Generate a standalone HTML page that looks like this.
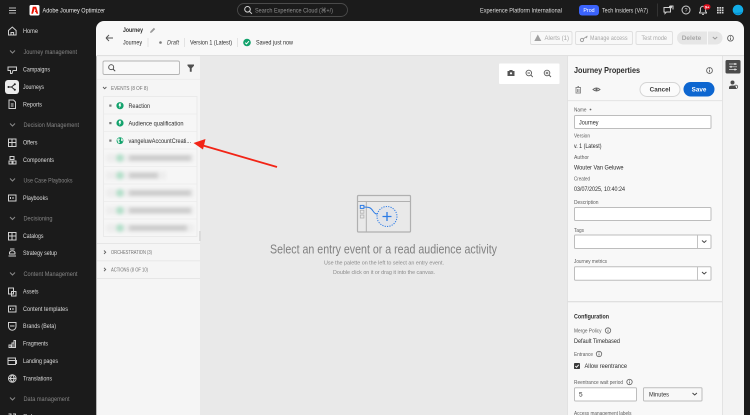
<!DOCTYPE html>
<html lang="en">
<head>
<meta charset="utf-8">
<title>Adobe Journey Optimizer</title>
<style>
html,body{margin:0;padding:0;background:#1b1b1b;width:750px;height:415px;overflow:hidden}
svg{display:block;font-family:"Liberation Sans",sans-serif;filter:blur(.28px)}
.n{font-size:6.500px;fill:#dcdcdc}
.g{font-size:6.500px;fill:#858585}
.ic{fill:none;stroke:#d0d0d0;stroke-width:1}
.t{font-size:6.500px;fill:#2c2c2c}
.l{font-size:5.500px;fill:#5c5c5c}
.d{fill:none;stroke:#5e5e5e;stroke-width:.9}
.dis{font-size:6.500px;fill:#a8a8a8}
.s{font-size:5.500px;fill:#707070}
.inp{fill:#fff;stroke:#bdbdbd;stroke-width:1}
</style>
</head>
<body>
<svg width="750" height="415" viewBox="0 0 750 415" xmlns="http://www.w3.org/2000/svg">
<defs>
<filter id="bl" x="-20%" y="-80%" width="140%" height="260%"><feGaussianBlur stdDeviation="1.900"/></filter>
</defs>
<rect width="750" height="415" fill="#1b1b1b"/>

<!-- top bar -->
<path d="M9 8h7M9 10.500h7M9 13h7" stroke="#bdbdbd" stroke-width="1"/>
<rect x="29.500" y="5" width="10" height="10.500" rx="1.500" fill="#fff"/>
<path d="M32.800 6.800h3.400l2 7h-1.700l-.6-1.700h-1.100l.6-1.500.3 0-.9-2.300-1.800 5.500h-1.700z" fill="#eb1000"/>
<text x="42.500" y="12.300" font-size="6.700" fill="#e8e8e8" textLength="62.500" lengthAdjust="spacingAndGlyphs">Adobe Journey Optimizer</text>
<rect x="237.500" y="3.500" width="110" height="13" rx="6.500" fill="#1b1b1b" stroke="#4a4a4a" stroke-width=".9"/>
<circle cx="247.500" cy="9.300" r="2.800" fill="none" stroke="#d5d5d5" stroke-width="1"/><path d="M249.500 11.400l2.400 2.400" stroke="#d5d5d5"/>
<text x="255" y="12.500" font-size="6.500" fill="#8f8f8f" textLength="78" lengthAdjust="spacingAndGlyphs">Search Experience Cloud (⌘+/)</text>
<text x="480" y="12.300" class="n" textLength="82" lengthAdjust="spacingAndGlyphs">Experience Platform International</text>
<rect x="579" y="5" width="20" height="10.500" rx="3" fill="#3b63fb"/>
<text x="589" y="12.200" font-size="5.300" fill="#fff" text-anchor="middle">Prod</text>
<text x="602" y="12.300" class="n" textLength="46" lengthAdjust="spacingAndGlyphs">Tech Insiders (VA7)</text>
<path d="M657.500 3.500v13" stroke="#3a3a3a" stroke-width=".8"/>
<path class="ic" d="M664 7.500h6.500v4.500h-4l-1.500 1.500v-1.500h-1zM670.500 6l2.500 0v3.500"/>
<circle cx="670.500" cy="7" r="1.500" fill="#d5d5d5"/>
<circle class="ic" cx="686" cy="10" r="4"/><text x="686" y="12" font-size="5.500" fill="#d5d5d5" text-anchor="middle">?</text>
<path class="ic" d="M699.500 13v-.6l.9-1v-2.500a2.600 2.600 0 0 1 5.200 0v2.500l.9 1v.6zM702 14.400h2"/>
<rect x="703.500" y="4.300" width="7" height="5.200" rx="2.600" fill="#e0101e"/>
<text x="707" y="8.300" font-size="4" font-weight="bold" fill="#fff" text-anchor="middle">9+</text>
<g fill="#d5d5d5"><rect x="717" y="7" width="1.700" height="1.700"/><rect x="719.400" y="7" width="1.700" height="1.700"/><rect x="721.800" y="7" width="1.700" height="1.700"/><rect x="717" y="9.400" width="1.700" height="1.700"/><rect x="719.400" y="9.400" width="1.700" height="1.700"/><rect x="721.800" y="9.400" width="1.700" height="1.700"/><rect x="717" y="11.800" width="1.700" height="1.700"/><rect x="719.400" y="11.800" width="1.700" height="1.700"/><rect x="721.800" y="11.800" width="1.700" height="1.700"/></g>
<circle cx="738" cy="10" r="5.300" fill="#12aee8"/><path d="M733.500 12.500q4.500 1 9 -1a5.300 5.300 0 0 1-9 1z" fill="#0a8fd0"/>

<!-- sidebar -->
<g>
<path class="ic" d="M8.500 30.500l3.800-3.500 3.800 3.500v4.500h-7.600zM11 35v-2.500h2.600V35"/>
<text x="23" y="33.200" class="n" textLength="15" lengthAdjust="spacingAndGlyphs">Home</text>
<path class="ic" d="M10 50.500l2.500 2.500 2.500-2.500" style="stroke:#8a8a8a"/>
<text x="23.500" y="54.200" class="g" textLength="53.500" lengthAdjust="spacingAndGlyphs">Journey management</text>
<path class="ic" d="M8 67h8.500v3.500H13l-1 3h-1.500v-3H8zM16.500 66.500v1"/>
<text x="23" y="71.700" class="n" textLength="27" lengthAdjust="spacingAndGlyphs">Campaigns</text>
<rect x="5" y="80" width="14" height="14" rx="3" fill="#ececec"/>
<path d="M8.500 87h3M11.500 87l3-2.500M11.500 87l3 2.500" stroke="#222" stroke-width=".9" fill="none"/><circle cx="8.500" cy="87" r="1" fill="#222"/><circle cx="14.800" cy="84.300" r="1" fill="#222"/><circle cx="14.800" cy="89.700" r="1" fill="#222"/>
<text x="23" y="89" class="n" textLength="21" lengthAdjust="spacingAndGlyphs">Journeys</text>
<path class="ic" d="M9 100h4.500l2 2v6.500H9zM10.800 104h2.800M10.800 106h2.800"/>
<text x="23" y="106.500" class="n" textLength="19" lengthAdjust="spacingAndGlyphs">Reports</text>
<path class="ic" d="M10 123.500l2.500 2.500 2.500-2.500" style="stroke:#8a8a8a"/>
<text x="23.500" y="127.200" class="g" textLength="55.500" lengthAdjust="spacingAndGlyphs">Decision Management</text>
<path class="ic" d="M8.500 139h7.500v7.500H8.500zM12 139v7.500M8.500 142.500H16"/>
<text x="23" y="144.700" class="n" textLength="14.500" lengthAdjust="spacingAndGlyphs">Offers</text>
<path class="ic" d="M10 156.500h4v3h-4zM9 161h3v3H9zM13 161h3v3h-3z"/>
<text x="23" y="162" class="n" textLength="31" lengthAdjust="spacingAndGlyphs">Components</text>
<path class="ic" d="M10 178.500l2.500 2.500 2.500-2.500" style="stroke:#8a8a8a"/>
<text x="23.500" y="182.700" class="g" textLength="49" lengthAdjust="spacingAndGlyphs">Use Case Playbooks</text>
<path class="ic" d="M8.500 195h7.500v6H8.500zM10.500 197v2M13 197v2"/>
<text x="23" y="200" class="n" textLength="25" lengthAdjust="spacingAndGlyphs">Playbooks</text>
<path class="ic" d="M10 217l2.500 2.500 2.500-2.500" style="stroke:#8a8a8a"/>
<text x="23.500" y="220.700" class="g" textLength="29" lengthAdjust="spacingAndGlyphs">Decisioning</text>
<path class="ic" d="M8.500 232.500h7.500v7.500H8.500zM12 232.500v7.500M8.500 236H16"/>
<text x="23" y="238" class="n" textLength="20.500" lengthAdjust="spacingAndGlyphs">Catalogs</text>
<path class="ic" d="M9.500 252.500a3 3 0 0 1 5.500 0v1.500h-5.500zM8.500 256h7.500M10 249h4.500"/>
<text x="23" y="255" class="n" textLength="34" lengthAdjust="spacingAndGlyphs">Strategy setup</text>
<path class="ic" d="M10 272.500l2.500 2.500 2.500-2.500" style="stroke:#8a8a8a"/>
<text x="23.500" y="276.200" class="g" textLength="54" lengthAdjust="spacingAndGlyphs">Content Management</text>
<path class="ic" d="M8.500 288h5v6h-5zM11.500 291.500h4.500v4.500h-4.500z"/>
<text x="23" y="293.500" class="n" textLength="15.500" lengthAdjust="spacingAndGlyphs">Assets</text>
<path class="ic" d="M8.500 306h7.500v6H8.500zM10.500 308v2M13 308v2"/>
<text x="23" y="311" class="n" textLength="45" lengthAdjust="spacingAndGlyphs">Content templates</text>
<path class="ic" d="M8.500 322.500h7.500v4a3.750 3.750 0 0 1-7.500 0zM10 326h4.500"/>
<text x="23" y="328.200" class="n" textLength="33" lengthAdjust="spacingAndGlyphs">Brands (Beta)</text>
<path class="ic" d="M8.500 347.500h7.500M9 347v-2h2v2M12 347v-4h2v4M14 347v-6.500h1.500v6.500"/>
<text x="23" y="345.500" class="n" textLength="25" lengthAdjust="spacingAndGlyphs">Fragments</text>
<path class="ic" d="M8 358h7.500v6.500H8zM8 360.500h7.500M16.500 360v4"/>
<text x="23" y="363" class="n" textLength="35" lengthAdjust="spacingAndGlyphs">Landing pages</text>
<circle class="ic" cx="12.300" cy="378.500" r="3.800"/><path class="ic" d="M8.500 378.500h7.600M12.300 374.700c-2.400 2.500-2.400 5 0 7.600M12.300 374.700c2.400 2.500 2.400 5 0 7.600"/>
<text x="23" y="380.500" class="n" textLength="29" lengthAdjust="spacingAndGlyphs">Translations</text>
<path class="ic" d="M10 397.500l2.500 2.500 2.500-2.500" style="stroke:#8a8a8a"/>
<text x="23.500" y="401.200" class="g" textLength="46" lengthAdjust="spacingAndGlyphs">Data management</text>
<path class="ic" d="M8.500 414h2.500v3M13 414h2.500v3"/>
<text x="23" y="418.500" class="n">Schemas</text>
</g>

<!-- main panel -->
<path d="M104 21H736a8 8 0 0 1 8 8V415H96V29a8 8 0 0 1 8-8z" fill="#f8f8f8"/>
<rect x="96.500" y="55" width="647.500" height="1.300" fill="#e0e0e0"/>

<!-- header -->
<path d="M106 38h7M106 38l3-3M106 38l3 3" fill="none" stroke="#555" stroke-width=".9"/>
<text x="123" y="32.200" font-size="6.500" font-weight="bold" fill="#2c2c2c" textLength="20" lengthAdjust="spacingAndGlyphs">Journey</text>
<path d="M150 33l.5-1.800 3.400-3.400 1.300 1.300-3.400 3.400z" fill="#9a9a9a"/>
<text x="123" y="44.700" class="t" textLength="19" lengthAdjust="spacingAndGlyphs">Journey</text>
<path d="M148 38v9M184.500 38v9M237.500 38v9" stroke="#dedede" stroke-width=".8"/>
<circle cx="160.500" cy="42.500" r="1.300" fill="#7a7a7a"/>
<text x="167" y="44.700" font-size="6.500" font-style="italic" fill="#444" textLength="12" lengthAdjust="spacingAndGlyphs">Draft</text>
<text x="190" y="44.700" class="t" textLength="42" lengthAdjust="spacingAndGlyphs">Version 1 (Latest)</text>
<circle cx="247" cy="42.500" r="3.800" fill="#12a26c"/><path d="M245.200 42.600l1.300 1.300 2.400-2.700" fill="none" stroke="#fff" stroke-width="1"/>
<text x="256" y="44.700" class="t" textLength="37" lengthAdjust="spacingAndGlyphs">Saved just now</text>

<g fill="#f8f8f8" stroke="#dedede" stroke-width=".9">
<rect x="530.500" y="31.500" width="41.500" height="13" rx="1.500"/>
<rect x="575.500" y="31.500" width="57" height="13" rx="1.500"/>
<rect x="636" y="31.500" width="36.500" height="13" rx="1.500"/>
</g>
<path d="M537.800 34.500l3.500 6.500h-7z" fill="#a0a0a0"/>
<text x="544.500" y="40.200" class="dis" textLength="24.500" lengthAdjust="spacingAndGlyphs">Alerts (1)</text>
<circle cx="582" cy="40" r="1.600" fill="none" stroke="#a0a0a0" stroke-width="1"/><path d="M583 39l4.500-3M586 37l1 1" stroke="#a0a0a0" stroke-width="1" fill="none"/>
<text x="590" y="40.200" class="dis" textLength="37.500" lengthAdjust="spacingAndGlyphs">Manage access</text>
<text x="641.500" y="40.200" class="dis" textLength="25.500" lengthAdjust="spacingAndGlyphs">Test mode</text>
<path d="M683.500 31.500H707v13h-23.500a6.500 6.500 0 0 1 0-13z" fill="#e6e6e6"/>
<path d="M708 31.500h8a6.500 6.500 0 0 1 0 13h-8z" fill="#e6e6e6"/>
<text x="691.500" y="40.200" class="dis" font-weight="bold" text-anchor="middle">Delete</text>
<path d="M712.800 37l2.200 2 2.200-2" fill="none" stroke="#9a9a9a" stroke-width="1"/>
<circle cx="730.500" cy="38.200" r="2.900" fill="none" stroke="#666" stroke-width=".9"/><path d="M730.500 37.500v2.500M730.500 36v.8" stroke="#666" stroke-width=".9"/>

<!-- canvas -->
<rect x="200" y="56.200" width="367.500" height="358.800" fill="#e9e9e9"/>
<rect x="499" y="63.500" width="60.500" height="20.500" fill="#fff" rx="1"/>
<path d="M507.500 71h1.500l.8-1h2.400l.8 1h1.500v5h-7z" fill="#555"/><circle cx="511" cy="73.300" r="1.100" fill="#fff"/>
<circle cx="528.800" cy="73" r="2.800" class="d"/><path d="M530.800 75l2 2M527.500 73h2.600" class="d"/>
<circle cx="547" cy="73" r="2.800" class="d"/><path d="M549 75l2 2M545.700 73h2.600M547 71.700v2.600" class="d"/>

<!-- illustration -->
<g fill="none">
<rect x="357.500" y="195.500" width="53" height="36.500" rx="1" stroke="#b0b0b0" stroke-width="1.200"/>
<path d="M357.500 201.500h53M366.300 201.500V232" stroke="#b0b0b0" stroke-width="1"/>
<rect x="360.300" y="205.400" width="3.600" height="3" stroke="#2c7be5" stroke-width="1"/>
<rect x="360.300" y="210.200" width="3.600" height="3" stroke="#b0b0b0" stroke-width=".8"/>
<rect x="360.300" y="215" width="3.600" height="3" stroke="#b0b0b0" stroke-width=".8"/>
<path d="M364 207c6 0 7 1 9 4s3 3 5 3" stroke="#2c7be5" stroke-width="1"/>
<circle cx="387" cy="216.500" r="10" fill="#e1e4ea" stroke="#2c7be5" stroke-width="1" stroke-dasharray="1.200 1.200"/>
<path d="M382.500 216.500h9M387 212v9" stroke="#2c7be5" stroke-width="1.300"/>
</g>
<text x="270" y="253.500" font-size="12.500" fill="#808080" textLength="227" lengthAdjust="spacingAndGlyphs">Select an entry event or a read audience activity</text>
<text x="324" y="264.500" font-size="5.800" fill="#8a8a8a" textLength="120" lengthAdjust="spacingAndGlyphs">Use the palette on the left to select an entry event.</text>
<text x="333" y="274" font-size="5.800" fill="#8a8a8a" textLength="102" lengthAdjust="spacingAndGlyphs">Double click on it or drag it into the canvas.</text>

<!-- left palette -->
<rect x="97" y="56.200" width="103" height="358.800" fill="#f5f5f5"/>
<rect x="96" y="56.200" width="1" height="358.800" fill="#b5b5b5"/>
<rect x="103" y="61" width="76.500" height="13.500" rx="1.500" fill="#f8f8f8" stroke="#b4b4b4" stroke-width=".9"/>
<circle cx="111.200" cy="67.200" r="2.500" class="d" style="stroke:#444"/><path d="M113 69l2.200 2.200" stroke="#444" stroke-width="1"/>
<path d="M187.500 64.500h6.500v1.200l-2.300 2.500v3.500h-1.900v-3.500l-2.300-2.500z" fill="#505050"/>
<path d="M97 79.300h103" stroke="#ebebeb" stroke-width=".8"/>
<path class="d" d="M103 87l1.700 1.700 1.700-1.700"/>
<text x="111" y="89.800" class="s" textLength="37" lengthAdjust="spacingAndGlyphs">EVENTS (8 OF 8)</text>
<rect x="103.500" y="96.500" width="93.500" height="140" fill="#f6f6f6" stroke="#e8e8e8" stroke-width=".8"/>
<path d="M103.500 114h93.500M103.500 131.500h93.500M103.500 149h93.500M103.500 166.500h93.500M103.500 184h93.500M103.500 201.500h93.500M103.500 219h93.500" stroke="#ebebeb" stroke-width=".7"/>
<rect x="109.300" y="104.500" width="2.200" height="2.200" fill="#7a7a7a"/>
<rect x="109.300" y="122" width="2.200" height="2.200" fill="#7a7a7a"/>
<rect x="109.300" y="139.500" width="2.200" height="2.200" fill="#7a7a7a"/>
<circle cx="120" cy="105.700" r="3.600" fill="#12a26c"/><path d="M119 103.500h2.300l-1 1.700h1l-2 3 .3-2.300h-.9z" fill="#fff"/>
<circle cx="120" cy="123" r="3.600" fill="#12a26c"/><path d="M119 120.800h2.300l-1 1.700h1l-2 3 .3-2.300h-.9z" fill="#fff"/>
<circle cx="120" cy="140.700" r="3.400" fill="#12a26c"/><path d="M117 139.500l2-1.500 1 1.500-1 1 1 2.300-1.500.7zM121 138l2 1.500-.5 2-1.500-.8z" fill="#d8f0e5"/>
<text x="128.500" y="107.900" class="t" textLength="21.500" lengthAdjust="spacingAndGlyphs">Reaction</text>
<text x="128.500" y="125.300" class="t" textLength="55" lengthAdjust="spacingAndGlyphs">Audience qualification</text>
<text x="128.500" y="142.800" class="t" textLength="62.500" lengthAdjust="spacingAndGlyphs">vangeluwAccountCreati...</text>
<g filter="url(#bl)">
<rect x="106" y="154" width="88" height="8" fill="#ededed"/>
<rect x="106" y="171.500" width="60" height="8" fill="#ededed"/>
<rect x="106" y="189" width="88" height="8" fill="#ededed"/>
<rect x="106" y="206.500" width="88" height="8" fill="#ededed"/>
<rect x="106" y="224" width="88" height="8" fill="#ededed"/>
<circle cx="120" cy="158" r="4" fill="#b4e0ca"/><circle cx="120" cy="175.500" r="4" fill="#b4e0ca"/><circle cx="120" cy="193" r="4" fill="#b4e0ca"/><circle cx="120" cy="210.500" r="4" fill="#b4e0ca"/><circle cx="120" cy="228" r="4" fill="#b4e0ca"/>
<rect x="129" y="155" width="62" height="6" fill="#cdcdcd"/>
<rect x="129" y="172.500" width="29" height="6" fill="#cdcdcd"/>
<rect x="129" y="190" width="62" height="6" fill="#cdcdcd"/>
<rect x="129" y="207.500" width="62" height="6" fill="#cdcdcd"/>
<rect x="129" y="225" width="58" height="6" fill="#cdcdcd"/>
</g>
<rect x="199" y="231" width="2" height="10" fill="#dcdcdc"/>
<path d="M97 243.500h103M97 260.800h103M97 278.500h103" stroke="#e6e6e6" stroke-width=".9"/>
<path class="d" d="M104 250.500l1.700 1.700-1.700 1.700M104 267.800l1.700 1.700-1.700 1.700"/>
<text x="111" y="254" class="s" textLength="41" lengthAdjust="spacingAndGlyphs">ORCHESTRATION (3)</text>
<text x="111" y="271.300" class="s" textLength="37" lengthAdjust="spacingAndGlyphs">ACTIONS (8 OF 10)</text>

<!-- red arrow -->
<path d="M277 167L203 145.500" stroke="#f22416" stroke-width="1.800"/>
<path d="M193.500 143l12-4 -2.500 10.500z" fill="#f22416"/>

<!-- right panel -->
<rect x="567.500" y="56.200" width="155" height="358.800" fill="#f8f8f8"/>
<path d="M567.500 56v359M722.500 56v359" stroke="#e0e0e0" stroke-width=".9"/>
<rect x="723" y="56.200" width="21" height="358.800" fill="#f3f3f3"/>
<rect x="725.500" y="60" width="15" height="13.500" rx="1.500" fill="#4a4a4a"/>
<path d="M729 64h8M729 66.800h8M729 69.500h8" stroke="#ddd" stroke-width=".7"/>
<circle cx="735" cy="64" r="1" fill="#ddd"/><circle cx="731" cy="66.800" r="1" fill="#ddd"/><circle cx="735" cy="69.500" r="1" fill="#ddd"/>
<circle cx="732.500" cy="82.500" r="2" fill="#4a4a4a"/><path d="M729 89v-1.500q0-2 3.500-2t3.500 2V89z" fill="#4a4a4a"/><circle cx="736" cy="86.800" r="1.700" fill="none" stroke="#4a4a4a" stroke-width=".8"/>

<text x="574" y="73" font-size="8.300" font-weight="bold" fill="#2c2c2c" textLength="66" lengthAdjust="spacingAndGlyphs">Journey Properties</text>
<circle cx="709.500" cy="70.500" r="2.900" fill="none" stroke="#666" stroke-width=".9"/><path d="M709.500 69.800v2.500M709.500 68.300v.8" stroke="#666" stroke-width=".9"/>
<path d="M575.500 87.500h5.500M576 87.500v5.500h4.500v-5.500M577.500 86.500h1.500M577.600 89v3M579 89v3" fill="none" stroke="#8a8a8a" stroke-width=".9"/>
<path d="M593 89.500q3.500-3 7 0q-3.500 3-7 0z" fill="none" stroke="#666" stroke-width=".9"/><circle cx="596.500" cy="89.500" r="1.100" fill="#666"/>
<rect x="640" y="82.500" width="40" height="14" rx="7" fill="#fbfbfb" stroke="#d5d5d5" stroke-width="1"/>
<text x="660" y="91.700" font-size="6.300" font-weight="bold" fill="#3a3a3a" text-anchor="middle">Cancel</text>
<rect x="683.500" y="82" width="31" height="14.500" rx="7.200" fill="#0d66d0"/>
<text x="699" y="91.700" font-size="6.300" font-weight="bold" fill="#fff" text-anchor="middle">Save</text>
<path d="M567.500 100.700h155" stroke="#e0e0e0" stroke-width=".9"/>

<text x="574" y="111.500" class="l" textLength="12.500" lengthAdjust="spacingAndGlyphs">Name</text><circle cx="590.500" cy="109.500" r=".9" fill="#666"/>
<rect x="574.500" y="115.500" width="136.500" height="13" rx="1" class="inp"/>
<text x="579" y="124.400" class="t" textLength="19.500" lengthAdjust="spacingAndGlyphs">Journey</text>
<text x="574" y="137.700" class="l" textLength="16" lengthAdjust="spacingAndGlyphs">Version</text>
<text x="574" y="148.200" class="t" textLength="27.500" lengthAdjust="spacingAndGlyphs">v. 1 (Latest)</text>
<text x="574" y="159" class="l" textLength="15" lengthAdjust="spacingAndGlyphs">Author</text>
<text x="574" y="169.700" class="t" textLength="49.500" lengthAdjust="spacingAndGlyphs">Wouter Van Geluwe</text>
<text x="574" y="180.300" class="l" textLength="16" lengthAdjust="spacingAndGlyphs">Created</text>
<text x="574" y="191.200" class="t" textLength="51" lengthAdjust="spacingAndGlyphs">03/07/2025, 10:40:24</text>
<text x="574" y="203.800" class="l" textLength="24.500" lengthAdjust="spacingAndGlyphs">Description</text>
<rect x="574.500" y="207.500" width="136.500" height="13" rx="1" class="inp"/>
<text x="574" y="231.800" class="l" textLength="10" lengthAdjust="spacingAndGlyphs">Tags</text>
<rect x="574.500" y="235" width="136.500" height="13.500" rx="1" class="inp"/>
<path d="M697.500 235v13.500" stroke="#bdbdbd" stroke-width=".9"/>
<path d="M702 240.500l2.200 2 2.200-2" fill="none" stroke="#444" stroke-width="1"/>
<text x="574" y="262.800" class="l" textLength="33" lengthAdjust="spacingAndGlyphs">Journey metrics</text>
<rect x="574.500" y="266.700" width="136.500" height="13.500" rx="1" class="inp"/>
<path d="M697.500 266.700v13.500" stroke="#bdbdbd" stroke-width=".9"/>
<path d="M702 272l2.200 2 2.200-2" fill="none" stroke="#444" stroke-width="1"/>
<rect x="567.500" y="301" width="155" height="1.300" fill="#e0e0e0"/>
<text x="574" y="318.700" font-size="6.500" font-weight="bold" fill="#2c2c2c" textLength="35" lengthAdjust="spacingAndGlyphs">Configuration</text>
<text x="574" y="332.300" class="l" textLength="27.500" lengthAdjust="spacingAndGlyphs">Merge Policy</text>
<circle cx="608" cy="330.500" r="2.700" fill="none" stroke="#666" stroke-width=".8"/><path d="M608 330v2M608 328.800v.6" stroke="#666" stroke-width=".8"/>
<text x="574" y="343" class="t" textLength="46" lengthAdjust="spacingAndGlyphs">Default Timebased</text>
<text x="574" y="355.800" class="l" textLength="19" lengthAdjust="spacingAndGlyphs">Entrance</text>
<circle cx="599" cy="354" r="2.700" fill="none" stroke="#666" stroke-width=".8"/><path d="M599 353.500v2M599 352.300v.6" stroke="#666" stroke-width=".8"/>
<rect x="574" y="363" width="6" height="6" rx=".8" fill="#3a3a3a"/>
<path d="M575.300 366l1.200 1.300 2.200-2.500" fill="none" stroke="#fff" stroke-width=".9"/>
<text x="584.500" y="368.200" class="t" textLength="42.500" lengthAdjust="spacingAndGlyphs">Allow reentrance</text>
<text x="574" y="383.800" class="l" textLength="49" lengthAdjust="spacingAndGlyphs">Reentrance wait period</text>
<circle cx="629.500" cy="382" r="2.700" fill="none" stroke="#666" stroke-width=".8"/><path d="M629.500 381.500v2M629.500 380.300v.6" stroke="#666" stroke-width=".8"/>
<rect x="574.500" y="387.700" width="62" height="13.300" rx="1" class="inp"/>
<text x="579" y="396.500" class="t">5</text>
<rect x="643.500" y="387.700" width="58.500" height="13.300" rx="1" fill="#f8f8f8" stroke="#bdbdbd" stroke-width="1"/>
<text x="649" y="396.500" class="t" textLength="20" lengthAdjust="spacingAndGlyphs">Minutes</text>
<path d="M692.500 393l2.200 2 2.200-2" fill="none" stroke="#444" stroke-width="1"/>
<text x="574" y="415" class="l" textLength="57.500" lengthAdjust="spacingAndGlyphs">Access management labels</text>
</svg>
</body>
</html>
